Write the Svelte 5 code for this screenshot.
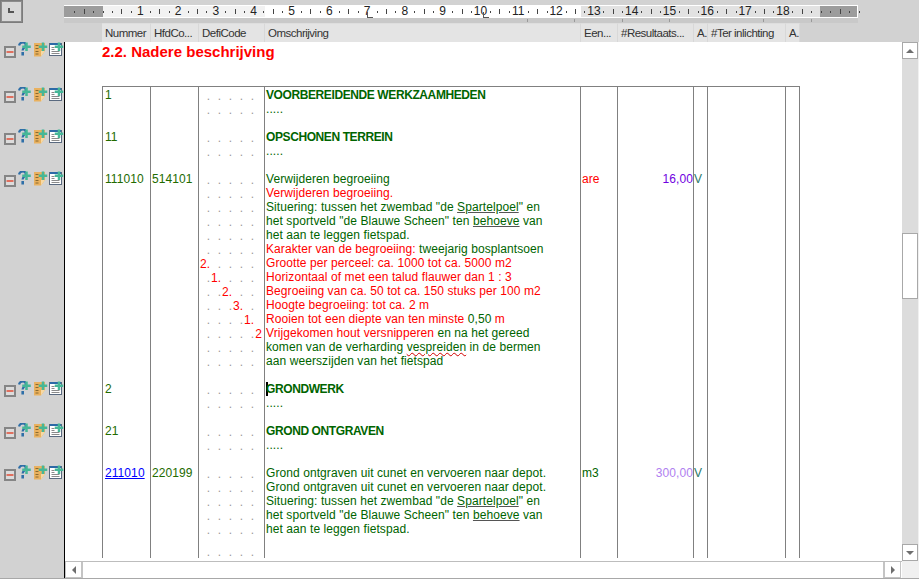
<script lang="ts">
	const LINE = 14;
	const TICK = 9.45;
	const RULER_X = 64;
	const ORIGIN = 102.5;

	const columns = [
		{ label: 'Nummer', width: 49 },
		{ label: 'HfdCo...', width: 48 },
		{ label: 'DefiCode', width: 66 },
		{ label: 'Omschrijving', width: 316 },
		{ label: 'Een...', width: 37 },
		{ label: '#Resultaats...', width: 76 },
		{ label: 'A.', width: 14 },
		{ label: '#Ter inlichting', width: 78 },
		{ label: 'A.', width: 14 }
	];

	const ticks = [];
	for (let k = -3; k <= 80; k++) ticks.push(k);

	const tabTicks = [527, 574, 622, 669, 763, 811];
	const tabStops = [367, 483];

	const G = 'g';
	const R = 'r';

	// each text line is a list of [colour, text, optional squiggle]
	const rows = [
		{
			nr: '1',
			head: 'VOORBEREIDENDE WERKZAAMHEDEN',
			lines: 2
		},
		{
			nr: '11',
			head: 'OPSCHONEN TERREIN',
			lines: 2
		},
		{
			nr: '111010',
			hfd: '514101',
			unit: 'are',
			unitRed: true,
			amount: '16,00',
			amountClass: 'purple',
			lines: 14,
			levels: [null, null, null, null, null, null, 0, 1, 2, 3, 4, 5],
			text: [
				[[G, 'Verwijderen begroeiing']],
				[[R, 'Verwijderen begroeiing.']],
				[[G, 'Situering: tussen het zwembad "de '], [G, 'Spartelpoel', 'dark'], [G, '" en']],
				[[G, 'het sportveld "de Blauwe Scheen" ten '], [G, 'behoeve', 'dark'], [G, ' van']],
				[[G, 'het aan te leggen fietspad.']],
				[[R, 'Karakter van de begroeiing:'], [G, ' tweejarig bosplantsoen']],
				[[R, 'Grootte per perceel: ca. 1000 tot ca. 5000 m2']],
				[[R, 'Horizontaal of met een talud flauwer dan 1 : 3']],
				[[R, 'Begroeiing van ca. 50 tot ca. 150 stuks per 100 m2']],
				[[R, 'Hoogte begroeiing: tot ca. 2 m']],
				[[R, 'Rooien tot een diepte van ten minste'], [G, ' 0,50'], [R, ' m']],
				[[R, 'Vrijgekomen hout versnipperen'], [G, ' en na het gereed']],
				[[G, 'komen van de verharding '], [G, 'vespreiden', 'red'], [G, ' in de bermen']],
				[[G, 'aan weerszijden van het fietspad']]
			]
		},
		{
			nr: '2',
			head: 'GRONDWERK',
			caret: true,
			lines: 2
		},
		{
			nr: '21',
			head: 'GROND ONTGRAVEN',
			lines: 2
		},
		{
			nr: '211010',
			link: true,
			hfd: '220199',
			unit: 'm3',
			amount: '300,00',
			amountClass: 'lilac',
			lines: 5,
			height: 93, // the page cuts this row off
			extraDot: true,
			text: [
				[[G, 'Grond ontgraven uit cunet en vervoeren naar depot.']],
				[[G, 'Grond ontgraven uit cunet en vervoeren naar depot.']],
				[[G, 'Situering: tussen het zwembad "de '], [G, 'Spartelpoel', 'dark'], [G, '" en']],
				[[G, 'het sportveld "de Blauwe Scheen" ten '], [G, 'behoeve', 'dark'], [G, ' van']],
				[[G, 'het aan te leggen fietspad.']]
			]
		}
	];

	const numbers = ['2', '1', '2', '3', '1', '2'];

	function rowHeight(row) {
		return row.height ?? row.lines * LINE + LINE;
	}
</script>

{#snippet plus(cx)}
	<path d="M{cx - 1.25} .5h2.5v3h3v2.5h-3v3h-2.5v-3h-3v-2.5h3z" fill="#46b797" />
{/snippet}

{#snippet toggles()}
	<div class="toggles">
		<svg class="minus" width="12" height="12" viewBox="0 0 12 12">
			<rect x="1" y="1" width="10" height="10" fill="#dcdcdc" stroke="#858585" stroke-width="2" />
			<rect x="2.5" y="5" width="7" height="2" fill="#e0705f" />
		</svg>
		<svg width="15" height="15" viewBox="0 0 15 15">
			<path d="M1 3.5 C1.5 1 3.5 .5 5 .5 C7.5 .5 8 2.5 7.5 4 C7 5.5 4.8 6 4.6 8.5" fill="none" stroke="#2f6fa8" stroke-width="2.2" />
			<rect x="3.4" y="10" width="2.6" height="3.5" fill="#2f6fa8" />
			{@render plus(8.5)}
		</svg>
		<svg width="15" height="15" viewBox="0 0 15 15">
			<path d="M1 1h11v8l-4 5.5H1z" fill="#e9b15f" />
			<path d="M8 14.5l4-5.5h-4z" fill="#f6d9a4" />
			<path d="M2.5 3.5h3M2.5 6.5h3M2.5 9.5h3M2.5 12h3" stroke="#8a6a30" stroke-width="1" />
			{@render plus(10)}
		</svg>
		<svg class="last" width="15" height="15" viewBox="0 0 15 15">
			<rect x=".5" y="1.5" width="12" height="12" fill="#fff" stroke="#5a6a80" />
			<rect x="1" y="1" width="11" height="2" fill="#2c6aa6" />
			<path d="M2.5 5.5h3M2.5 7.5h3M2.5 9.5h8M2.5 11.5h8" stroke="#8a8a8a" stroke-width="1" />
			{@render plus(10)}
		</svg>
	</div>
{/snippet}

{#snippet dots(level)}
	<div class="dots">
		{#each [0, 1, 2, 3, 4, 5] as seg}
			<span class="seg">
				{#if level === seg && seg === 5}
					<i>{numbers[seg]}</i>
				{:else if level === seg}
					<i>{numbers[seg]}.</i>
				{:else if seg < 5}
					.
				{/if}
			</span>
		{/each}
	</div>
{/snippet}

<div class="app">
	<header class="rulerbar">
		<button class="corner" aria-label="Tab type"><span class="corner-l"></span></button>
		<div class="ruler">
			<span class="zone margin-left"></span>
			<span class="zone shade-left"></span>
			<span class="zone shade-right"></span>
			<span class="zone margin-right"></span>
			{#each ticks as k}
				{@const x = ORIGIN - RULER_X + k * TICK}
				{#if k > 0 && k % 4 === 0 && k <= 72}
					<span class="num" style="left: {x}px">{k / 4}</span>
				{:else}
					<span class="tick" class:mid={(k + 8) % 4 === 2} style="left: {x}px"></span>
				{/if}
			{/each}
			{#each tabStops as x}
				<span class="tabstop" style="left: {x - RULER_X}px"></span>
			{/each}
			{#each tabTicks as x}
				<span class="tabtick" style="left: {x - RULER_X}px"></span>
			{/each}
		</div>
	</header>

	<div class="colheads">
		{#each columns as col}
			<div class="colhead" style="width: {col.width}px">{col.label}</div>
		{/each}
	</div>

	<div class="body">
		<aside class="gutter">
			<div class="gutter-row title-row">{@render toggles()}</div>
			{#each rows as row}
				<div class="gutter-row" style="height: {rowHeight(row)}px">{@render toggles()}</div>
			{/each}
		</aside>

		<div class="center">
			<main class="doc">
				<h2>2.2. Nadere beschrijving</h2>
				<div class="table">
					{#each rows as row}
						<div class="row" style="height: {rowHeight(row)}px">
							<div class="cell c-nr">
								{#if row.link}<a href="#top">{row.nr}</a>{:else}{row.nr}{/if}
							</div>
							<div class="cell c-hfd">{row.hfd ?? ''}</div>
							<div class="cell c-defi">
								{#each Array(row.lines) as _, i}
									{@render dots(row.levels?.[i] ?? null)}
								{/each}
								{#if row.extraDot}
									<div class="extra">{@render dots(null)}</div>
								{/if}
							</div>
							<div class="cell c-text">
								{#if row.head}
									<div class="line head">
										{#if row.caret}<span class="caret"></span>{/if}{row.head}
									</div>
									<div class="line green">.....</div>
								{:else}
									{#each row.text as parts}
										<div class="line">
											{#each parts as [colour, text, squiggle]}
												<span
													class:red={colour === R}
													class:green={colour === G}
													class:sq-red={squiggle === 'red'}
													class:sq-dark={squiggle === 'dark'}>{text}</span>
											{/each}
										</div>
									{/each}
								{/if}
							</div>
							<div class="cell c-unit" class:red={row.unitRed}>{row.unit ?? ''}</div>
							<div class="cell c-amount {row.amountClass ?? ''}">{row.amount ?? ''}</div>
							<div class="cell c-a">{row.amount ? 'V' : ''}</div>
							<div class="cell"></div>
							<div class="cell c-last"></div>
						</div>
					{/each}
				</div>
			</main>

			<div class="hscroll">
				<button class="sbtn" aria-label="Left"><span class="arrow left"></span></button>
				<div class="htrack"></div>
				<button class="sbtn" aria-label="Right"><span class="arrow right"></span></button>
			</div>
		</div>

		<div class="vscroll">
			<button class="sbtn v" aria-label="Up"><span class="arrow up"></span></button>
			<div class="vtrack"><div class="thumb"></div></div>
			<button class="sbtn v" aria-label="Down"><span class="arrow down"></span></button>
			<div class="scorner"></div>
		</div>
	</div>
</div>

<style>
	:global(body) {
		margin: 0;
	}

	.app {
		width: 919px;
		height: 579px;
		box-sizing: border-box;
		border-bottom: 1px solid #a8a8a8;
		background: #d2d2d2;
		display: flex;
		flex-direction: column;
		overflow: hidden;
		font-family: 'Liberation Sans', Arial, sans-serif;
		font-size: 12px;
		color: #006400;
	}

	/* ruler */
	.rulerbar {
		height: 23px;
		display: flex;
		flex-shrink: 0;
	}

	.corner {
		width: 23px;
		height: 23px;
		padding: 0;
		box-sizing: border-box;
		border: 1px solid #7c7c7c;
		outline: 1px solid #8c8c8c;
		outline-offset: -2px;
		background: #d8d8d8;
		position: relative;
		margin-right: 41px;
	}

	.corner-l {
		position: absolute;
		left: 7px;
		top: 7px;
		width: 4px;
		height: 3px;
		border-left: 2px solid #555;
		border-bottom: 2px solid #555;
	}

	.ruler {
		position: relative;
		width: 794px;
		height: 13px;
		margin-top: 5px;
		background: #fff;
		box-shadow: 0 5px 0 #c9c9c9;
	}

	.zone {
		position: absolute;
		top: 1px;
		bottom: 1px;
	}

	.margin-left {
		left: 0;
		width: 39px;
		background: #9c9c9c;
	}

	.shade-left {
		left: 39px;
		width: 162px;
		background: #f2f2f2;
	}

	.shade-right {
		left: 517px;
		width: 239px;
		background: #e2e2e2;
	}

	.margin-right {
		left: 756px;
		width: 37px;
		background: #9c9c9c;
	}

	.tick {
		position: absolute;
		top: 6px;
		width: 1px;
		height: 2px;
		background: #444;
	}

	.tick.mid {
		top: 4px;
		height: 5px;
	}

	.num {
		position: absolute;
		top: 0;
		transform: translateX(-50%);
		font-size: 12px;
		line-height: 13px;
		color: #222;
	}

	.tabstop {
		position: absolute;
		top: 7px;
		width: 5px;
		height: 5px;
		border-left: 1.5px solid #555;
		border-bottom: 1.5px solid #555;
	}

	.tabtick {
		position: absolute;
		top: 14px;
		width: 1px;
		height: 3px;
		background: #999;
	}

	/* column headers */
	.colheads {
		height: 19px;
		flex-shrink: 0;
		display: flex;
		padding-left: 102px;
	}

	.colhead {
		box-sizing: border-box;
		background: #e4e4e4;
		border-right: 1px solid #d8d8d8;
		border-top: 1px solid #dedede;
		padding-left: 3px;
		font-size: 11.5px;
		letter-spacing: -0.5px;
		line-height: 19px;
		color: #333;
		white-space: nowrap;
		overflow: hidden;
	}

	/* body */
	.body {
		flex: 1;
		min-height: 0;
		display: flex;
	}

	.gutter {
		width: 65px;
		flex-shrink: 0;
		box-sizing: border-box;
		border-right: 1px solid #000;
		overflow: hidden;
	}

	.gutter-row {
		box-sizing: border-box;
	}

	.title-row {
		height: 45px;
	}

	.toggles {
		display: flex;
		padding-left: 4px;
		align-items: flex-start;
	}

	.toggles svg {
		display: block;
		flex-shrink: 0;
	}

	.toggles .minus {
		margin: 4px 2px 0 0;
	}

	.toggles .last {
		margin-left: 1px;
	}

	.center {
		flex: 1;
		min-width: 0;
		display: flex;
		flex-direction: column;
	}

	.doc {
		flex: 1;
		min-height: 0;
		background: #fff;
		padding-left: 37px;
		overflow: hidden;
	}

	h2 {
		margin: 0;
		height: 44px;
		font-size: 15px;
		line-height: 19px;
		font-weight: bold;
		color: #f00;
	}

	/* table */
	.table {
		width: 698px;
		height: 472px;
		box-sizing: border-box;
		border-top: 1px solid #808080;
		overflow: hidden;
	}

	.row {
		display: grid;
		grid-template-columns: 48px 48px 66px 316px 37px 76px 14px 78px 15px;
		line-height: 14px;
	}

	.cell {
		box-sizing: border-box;
		border-left: 1px solid #808080;
		padding-top: 1px;
		white-space: nowrap;
		letter-spacing: 0.08px;
	}

	.c-last {
		border-right: 1px solid #808080;
	}

	.c-nr {
		padding-left: 2px;
		color: #236b00;
	}

	.c-hfd {
		padding-left: 1px;
		color: #236b00;
	}

	.c-nr a {
		color: #0000ff;
	}

	.c-defi {
		padding-top: 2px;
	}

	.c-text {
		padding-left: 1px;
	}

	.c-unit {
		padding-left: 1px;
	}

	.c-amount {
		text-align: right;
	}

	.c-a {
		color: #2a7a6a;
	}

	.line {
		height: 14px;
	}

	.head {
		font-weight: bold;
		letter-spacing: -0.4px;
	}

	.caret {
		display: inline-block;
		width: 2px;
		height: 14px;
		margin-right: -2px;
		background: #000;
		vertical-align: top;
	}

	.dots {
		display: grid;
		grid-template-columns: repeat(5, 11px) 8px;
		height: 14px;
		color: #999;
		line-height: 14px;
		letter-spacing: 0;
	}

	.seg {
		text-align: right;
		white-space: nowrap;
		direction: rtl;
	}

	.seg i {
		font-style: normal;
		color: #f00;
		direction: ltr;
		unicode-bidi: embed;
	}

	.extra {
		margin-top: 10px;
	}

	.extra .dots {
		height: 10px;
		line-height: 10px;
	}

	.green {
		color: #006400;
	}

	.red {
		color: #f00;
	}

	.purple {
		color: #7000e0;
	}

	.lilac {
		color: #b080f0;
	}

	.sq-red {
		text-decoration: underline wavy #d00000 1px;
		text-underline-offset: 1px;
	}

	.sq-dark {
		text-decoration: underline solid #555 1px;
		text-underline-offset: 1px;
	}

	/* scrollbars */
	.hscroll {
		height: 17px;
		flex-shrink: 0;
		box-sizing: border-box;
		display: flex;
		background: #fff;
		border-top: 1px solid #bdbdbd;
		padding-right: 1px;
	}

	.htrack {
		flex: 1;
		border: 1px solid #c4c4c4;
		border-width: 0 1px;
	}

	.sbtn {
		width: 17px;
		height: 16px;
		padding: 0;
		box-sizing: border-box;
		background: #fff;
		border: 1px solid #c4c4c4;
		border-top: 0;
		display: flex;
		align-items: center;
		justify-content: center;
	}

	.sbtn.v {
		width: 16px;
		height: 17px;
		border: 1px solid #a8a8a8;
		flex-shrink: 0;
	}

	.arrow {
		width: 0;
		height: 0;
		border: 4px solid transparent;
	}

	.arrow.left {
		border-left: 0;
		border-right-color: #6e6e6e;
	}

	.arrow.right {
		border-right: 0;
		border-left-color: #6e6e6e;
	}

	.arrow.up {
		border-top: 0;
		border-bottom-color: #6e6e6e;
	}

	.arrow.down {
		border-bottom: 0;
		border-top-color: #6e6e6e;
	}

	.vscroll {
		width: 17px;
		flex-shrink: 0;
		display: flex;
		flex-direction: column;
		background: #f0f0f0;
	}

	.vtrack {
		flex: 1;
		width: 16px;
		min-height: 0;
		background: #dcdcdc;
	}

	.thumb {
		width: 16px;
		height: 66px;
		margin-top: 174px;
		box-sizing: border-box;
		background: #fff;
		border: 1px solid #a8a8a8;
	}

	.scorner {
		height: 17px;
		flex-shrink: 0;
	}
</style>
